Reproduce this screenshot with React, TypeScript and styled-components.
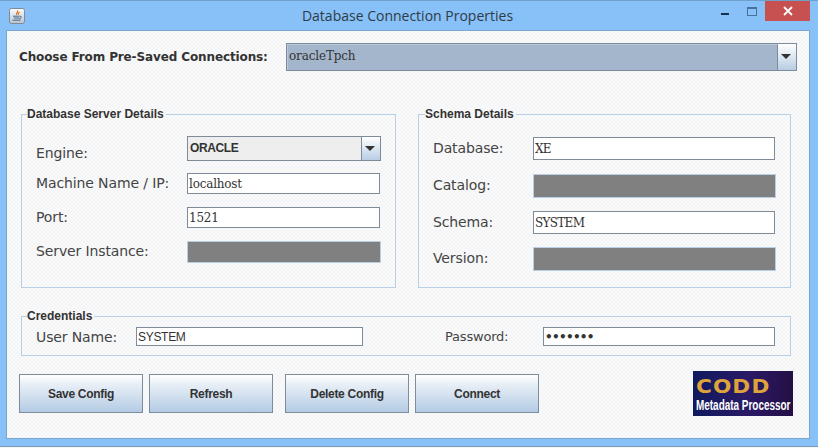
import styled, { createGlobalStyle } from 'styled-components';

const GlobalStyle = createGlobalStyle`
  html, body {
    margin: 0;
    padding: 0;
    background: #f4f5f6;
  }
  * {
    box-sizing: border-box;
  }
`;

const JavaIcon = () => (
  <svg width="16" height="16" viewBox="0 0 16 16">
    <defs>
      <linearGradient id="javaBg" x1="0" y1="0" x2="0" y2="1">
        <stop offset="0" stopColor="#fbfcfd" />
        <stop offset="1" stopColor="#b9c4cf" />
      </linearGradient>
    </defs>
    <rect x="0.5" y="0.5" width="15" height="15" rx="2" fill="url(#javaBg)" stroke="#7d8a97" />
    <path d="M8.5 2.5C9.8 4 6.6 5 7.6 6.8M10.4 4C9.6 5 8.6 5.4 9.4 6.8" fill="none" stroke="#d9731f" strokeWidth="1.2" />
    <path d="M4 8.2h6.6M5 10h5.4M3.6 12.2h8M11 8.2c2 0 2 2-.6 2.4" fill="none" stroke="#46688c" strokeWidth="1" />
  </svg>
);

type FieldRow = { label: string; value?: string; top: number; height: number; caps?: boolean };

const serverRows: FieldRow[] = [
  { label: 'Machine Name / IP:', value: 'localhost', top: 12, height: 21 },
  { label: 'Port:', value: '1521', top: 13, height: 21 },
  { label: 'Server Instance:', top: 13, height: 22 },
];

const schemaRows: FieldRow[] = [
  { label: 'Database:', value: 'XE', top: 0, height: 23, caps: true },
  { label: 'Catalog:', top: 14, height: 24 },
  { label: 'Schema:', value: 'SYSTEM', top: 13, height: 23, caps: true },
  { label: 'Version:', top: 13, height: 24 },
];

const renderRow = (row: FieldRow) => (
  <Form.Row key={row.label} $top={row.top}>
    <Form.Label>{row.label}</Form.Label>
    {row.value ? (
      <Form.Input $height={row.height} $caps={row.caps}>
        {row.value}
      </Form.Input>
    ) : (
      <Form.Disabled $height={row.height} />
    )}
  </Form.Row>
);

export default function App() {
  return (
    <>
      <GlobalStyle />
      <Frame.Window>
        <Frame.TitleBar>
          <Frame.IconSlot>
            <JavaIcon />
          </Frame.IconSlot>
          <Frame.Title>Database Connection Properties</Frame.Title>
          <Frame.Controls>
            <Frame.Minimize />
            <Frame.Maximize />
            <Frame.Close>
              <svg width="10" height="10" viewBox="0 0 10 10">
                <path d="M1 1l8 8M9 1l-8 8" stroke="#fff" strokeWidth="1.8" />
              </svg>
            </Frame.Close>
          </Frame.Controls>
        </Frame.TitleBar>

        <Frame.Content>
          <Top.Row>
            <Top.Label>Choose From Pre-Saved Connections:</Top.Label>
            <Combo.Box $width={511} $height={28}>
              <Combo.Value $tone="selected">oracleTpch</Combo.Value>
              <Combo.Arrow />
            </Combo.Box>
          </Top.Row>

          <Panels.Grid>
            <Panels.Group>
              <Panels.Legend>Database Server Details</Panels.Legend>
              <Form.Column $labelWidth={151} $first={14}>
                <Form.Row $top={0}>
                  <Form.Label $nudge={5}>Engine:</Form.Label>
                  <Combo.Box $width={194} $height={25}>
                    <Combo.Value $tone="plain">ORACLE</Combo.Value>
                    <Combo.Arrow />
                  </Combo.Box>
                </Form.Row>
                {serverRows.map(renderRow)}
              </Form.Column>
            </Panels.Group>

            <Panels.Group>
              <Panels.Legend $indent={-8}>Schema Details</Panels.Legend>
              <Form.Column $labelWidth={100} $first={15}>
                {schemaRows.map(renderRow)}
              </Form.Column>
            </Panels.Group>
          </Panels.Grid>

          <Panels.Credentials>
            <Panels.Legend>Credentials</Panels.Legend>
            <Login.Row>
              <Form.Label $nudge={1}>User Name:</Form.Label>
              <Login.User>SYSTEM</Login.User>
              <Login.PasswordLabel>Password:</Login.PasswordLabel>
              <Login.Password>•••••••</Login.Password>
            </Login.Row>
          </Panels.Credentials>

          <Actions.Row>
            <Actions.Button>Save Config</Actions.Button>
            <Actions.Button>Refresh</Actions.Button>
            <Actions.Button $gap={12}>Delete Config</Actions.Button>
            <Actions.Button>Connect</Actions.Button>
            <Logo.Box>
              <Logo.Name>CODD</Logo.Name>
              <Logo.Tagline>Metadata Processor</Logo.Tagline>
            </Logo.Box>
          </Actions.Row>
        </Frame.Content>
      </Frame.Window>
    </>
  );
}

const Frame = {
  Window: styled.div`
    display: flex;
    flex-direction: column;
    width: 818px;
    height: 447px;
    background-color: #87c1f8;
    border-top: 1px solid #6f9fcb;
    border-bottom: 1px solid #7a9dbd;
    overflow: hidden;
  `,
  TitleBar: styled.div`
    position: relative;
    display: flex;
    align-items: flex-start;
    justify-content: center;
    height: 29px;
    flex: none;
  `,
  IconSlot: styled.div`
    position: absolute;
    top: 7px;
    left: 9px;
    height: 16px;
  `,
  Title: styled.div`
    margin: 6px 3px 0 0;
    font-family: 'Open Sans', 'Liberation Sans', sans-serif;
    font-size: 14px;
    line-height: 18px;
    color: #2f3b46;
  `,
  Controls: styled.div`
    position: absolute;
    top: 0;
    right: 8px;
    display: flex;
    align-items: flex-start;
  `,
  Minimize: styled.div`
    width: 8px;
    height: 2px;
    margin: 12px 18px 0 0;
    background-color: #17304a;
  `,
  Maximize: styled.div`
    width: 10px;
    height: 9px;
    margin: 6px 8px 0 0;
    border: 1px solid #47719b;
    border-top-width: 2px;
  `,
  Close: styled.div`
    display: flex;
    align-items: center;
    justify-content: center;
    width: 45px;
    height: 20px;
    background-color: #c75050;
  `,
  Content: styled.div`
    flex: 1;
    margin: 0 8px 7px 6px;
    padding: 12px 12px 0;
    border: 1px solid #7ba5cf;
    background-color: #f7f7f7;
    background-image: conic-gradient(#f3f4f5 25%, #fafafa 0 50%, #f3f4f5 0 75%, #fafafa 0);
    background-size: 4px 4px;
  `,
};

const Top = {
  Row: styled.div`
    display: flex;
    align-items: center;
    justify-content: space-between;
  `,
  Label: styled.div`
    font-family: 'DejaVu Sans', sans-serif;
    font-size: 12px;
    font-weight: 700;
    letter-spacing: -0.12px;
    color: #333;
  `,
};

const Combo = {
  Box: styled.div<{ $width: number; $height: number }>`
    display: flex;
    width: ${(p) => p.$width}px;
    height: ${(p) => p.$height}px;
    border: 1px solid #7d8b9a;
  `,
  Value: styled.div<{ $tone: 'selected' | 'plain' }>`
    flex: 1;
    padding: 0 2px 1px;
    display: flex;
    align-items: center;
    border-right: 1px solid #7d8b9a;
    ${(p) =>
      p.$tone === 'selected'
        ? `
      padding-left: 1px;
      padding-bottom: 4px;
      background-color: #a3b6cc;
      border-top: 1px solid #b9c9da;
      border-left: 1px solid #b9c9da;
      font-family: 'DejaVu Serif', serif;
      font-size: 12px;
      letter-spacing: -0.15px;
      color: #333;
    `
        : `
      background-color: #eeeeee;
      font-family: 'Liberation Sans', sans-serif;
      font-size: 12px;
      font-weight: 700;
      letter-spacing: -0.4px;
      color: #333;
    `}
  `,
  Arrow: styled.div`
    position: relative;
    width: 18px;
    background-image: linear-gradient(#ffffff, #b8cde4);
    &::after {
      content: '';
      position: absolute;
      top: 50%;
      left: 3px;
      margin-top: -3px;
      border-style: solid;
      border-width: 5px 5px 0;
      border-color: #333 transparent transparent;
    }
  `,
};

const Panels = {
  Grid: styled.div`
    display: grid;
    grid-template-columns: 375px 373px;
    column-gap: 22px;
    margin: 35px 0 0 2px;
  `,
  Group: styled.fieldset`
    height: 182px;
    margin: 0;
    padding: 0 0 0 14px;
    border: 1px solid #b8cfe5;
    min-width: 0;
  `,
  Credentials: styled.fieldset`
    height: 48px;
    width: 770px;
    margin: 20px 0 0 2px;
    padding: 0 0 0 14px;
    border: 1px solid #b8cfe5;
    min-width: 0;
  `,
  Legend: styled.legend<{ $indent?: number }>`
    margin-left: ${(p) => p.$indent ?? -9}px;
    padding: 1px 2px 0 0;
    font-family: 'Liberation Sans', sans-serif;
    font-size: 12px;
    font-weight: 700;
    line-height: 15px;
    color: #333;
  `,
};

const Form = {
  Column: styled.div<{ $labelWidth: number; $first: number }>`
    display: flex;
    flex-direction: column;
    padding-top: ${(p) => p.$first}px;
    --label-width: ${(p) => p.$labelWidth}px;
  `,
  Row: styled.div<{ $top: number }>`
    display: flex;
    align-items: center;
    margin-top: ${(p) => p.$top}px;
  `,
  Label: styled.div<{ $nudge?: number }>`
    flex: none;
    width: var(--label-width, 100px);
    padding-top: ${(p) => p.$nudge ?? 0}px;
    margin-bottom: ${(p) => -(p.$nudge ?? 0)}px;
    padding-bottom: 2px;
    font-family: 'DejaVu Sans', sans-serif;
    font-size: 14px;
    letter-spacing: -0.12px;
    color: #444;
    white-space: nowrap;
  `,
  Input: styled.div<{ $height: number; $caps?: boolean }>`
    flex: 1;
    margin-right: 15px;
    height: ${(p) => p.$height}px;
    padding: 0 1px;
    display: flex;
    align-items: center;
    border: 1px solid #7d8b9a;
    background-color: #fff;
    font-family: 'DejaVu Serif', serif;
    font-size: 12px;
    letter-spacing: ${(p) => (p.$caps ? '-0.7px' : '-0.2px')};
    color: #333;
  `,
  Disabled: styled.div<{ $height: number }>`
    flex: 1;
    margin-right: 14px;
    height: ${(p) => p.$height}px;
    border: 1px solid #b8cfe5;
    background-color: #808080;
  `,
};

const Login = {
  Row: styled.div`
    display: flex;
    align-items: center;
    padding-top: 3px;
    --label-width: 100px;
  `,
  User: styled.div`
    width: 227px;
    height: 19px;
    padding: 1px 1px 0;
    display: flex;
    align-items: center;
    border: 1px solid #7d8b9a;
    background-color: #fff;
    font-family: 'Liberation Sans', sans-serif;
    font-size: 12px;
    letter-spacing: -0.3px;
    color: #333;
  `,
  PasswordLabel: styled.div`
    width: 98px;
    margin-left: 82px;
    font-family: 'DejaVu Sans', sans-serif;
    font-size: 13px;
    letter-spacing: -0.2px;
    color: #444;
  `,
  Password: styled.div`
    width: 232px;
    height: 19px;
    padding: 1px 1px 0;
    display: flex;
    align-items: center;
    border: 1px solid #7d8b9a;
    background-color: #fff;
    font-family: 'DejaVu Sans', sans-serif;
    font-size: 12px;
    font-weight: 700;
    letter-spacing: -0.7px;
    color: #333;
  `,
};

const Actions = {
  Row: styled.div`
    display: flex;
    align-items: center;
    margin-top: 15px;
  `,
  Button: styled.div<{ $gap?: number }>`
    display: flex;
    align-items: center;
    justify-content: center;
    width: 124px;
    height: 39px;
    margin-right: 6px;
    margin-left: ${(p) => (p.$gap ? p.$gap - 6 : 0)}px;
    border: 1px solid #7d8b9a;
    background-image: linear-gradient(#ffffff, #e8eff6 25%, #b4cbe4);
    font-family: 'Liberation Sans', sans-serif;
    font-size: 12px;
    font-weight: 700;
    letter-spacing: -0.3px;
    color: #333;
  `,
};

const Logo = {
  Box: styled.div`
    display: flex;
    flex-direction: column;
    width: 100px;
    height: 45px;
    margin-left: auto;
    margin-right: 4px;
    padding: 4px 0 0 3px;
    background-image: linear-gradient(90deg, #101a5e, #2a1a66 55%, #240f45);
    overflow: hidden;
  `,
  Name: styled.div`
    font-family: 'DejaVu Sans', sans-serif;
    font-size: 20px;
    font-weight: 700;
    line-height: 23px;
    letter-spacing: 1px;
    color: #dfa33c;
    transform: scaleX(1.08);
    transform-origin: left center;
  `,
  Tagline: styled.div`
    font-family: 'Liberation Sans', sans-serif;
    font-size: 14px;
    font-weight: 700;
    line-height: 15px;
    color: #fff;
    white-space: nowrap;
    transform: scaleX(0.71);
    transform-origin: left center;
  `,
};
